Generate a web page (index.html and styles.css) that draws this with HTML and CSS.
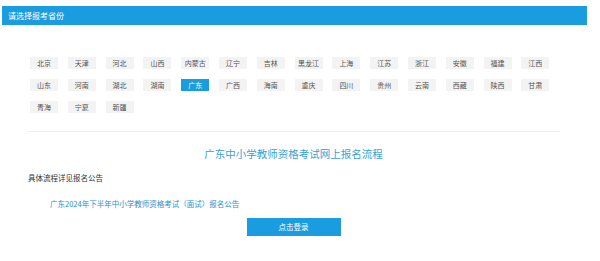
FILE: index.html
```html
<!DOCTYPE html>
<html lang="zh-CN">
<head>
<meta charset="utf-8">
<title>请选择报考省份</title>
<link rel="stylesheet" href="styles.css">
</head>
<body>
<div class="header">请选择报考省份</div>
<div class="content">
  <div class="provinces">
    <a class="prov">北京</a><a class="prov">天津</a><a class="prov">河北</a><a class="prov">山西</a><a class="prov">内蒙古</a><a class="prov">辽宁</a><a class="prov">吉林</a><a class="prov">黑龙江</a><a class="prov">上海</a><a class="prov">江苏</a><a class="prov">浙江</a><a class="prov">安徽</a><a class="prov">福建</a><a class="prov">江西</a>
    <a class="prov">山东</a><a class="prov">河南</a><a class="prov">湖北</a><a class="prov">湖南</a><a class="prov active">广东</a><a class="prov">广西</a><a class="prov">海南</a><a class="prov">重庆</a><a class="prov">四川</a><a class="prov">贵州</a><a class="prov">云南</a><a class="prov">西藏</a><a class="prov">陕西</a><a class="prov">甘肃</a>
    <a class="prov">青海</a><a class="prov">宁夏</a><a class="prov">新疆</a>
  </div>
  <div class="sep"></div>
  <h2 class="title">广东中小学教师资格考试网上报名流程</h2>
  <p class="note">具体流程详见报名公告</p>
  <a class="notice">广东2024年下半年中小学教师资格考试（面试）报名公告</a>
  <div class="actions"><a class="login">点击登录</a></div>
</div>
</body>
</html>
```
FILE: styles.css
```css
html, body {
  margin: 0;
  padding: 0;
  background: #fff;
  font-family: "Noto Sans CJK SC", "Noto Sans", sans-serif;
}
.header {
  margin: 6px 13px 0 2px;
  height: 19px;
  line-height: 19px;
  background: #1a9de0;
  color: #fff;
  font-size: 8px;
  padding-left: 6px;
}
.content {
  margin-left: 27px;
  width: 533px;
}
.provinces {
  display: flex;
  flex-wrap: wrap;
  gap: 10px 9.8px;
  padding: 32px 0 0 3px;
}
.prov {
  width: 28px;
  height: 12px;
  line-height: 12px;
  background: #f3f3f3;
  color: #555;
  font-size: 7px;
  text-align: center;
}
.prov.active {
  background: #1a9de0;
  color: #fff;
}
.sep {
  height: 1px;
  background: #f0f0f0;
  margin-top: 18px;
}
.title {
  margin: 15px 0 0;
  text-align: center;
  font-weight: normal;
  font-size: 10.5px;
  line-height: 14px;
  color: #3a9fd6;
}
.note {
  margin: 12px 0 0 1px;
  font-size: 7.5px;
  line-height: 10px;
  color: #333;
}
.notice {
  display: block;
  margin: 16px 0 0 23px;
  font-size: 7.5px;
  line-height: 10px;
  color: #2a8fd0;
}
.actions {
  display: flex;
  justify-content: center;
  margin-top: 9px;
}
.login {
  width: 94px;
  height: 18px;
  line-height: 18px;
  background: #1a9de0;
  color: #fff;
  font-size: 7.5px;
  text-align: center;
}
```
